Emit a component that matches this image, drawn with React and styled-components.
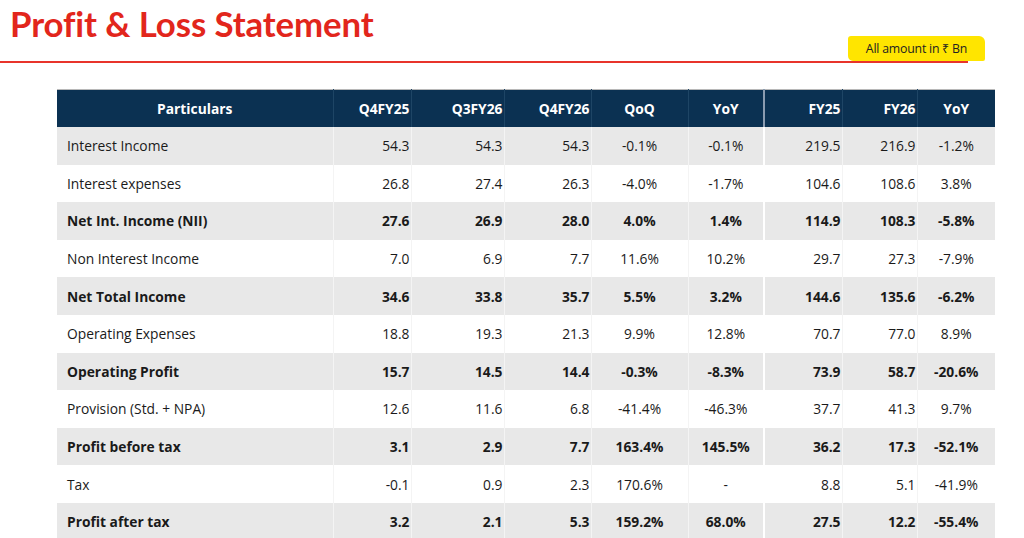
import React from 'react';
import styled, { createGlobalStyle } from 'styled-components';

const GlobalStyle = createGlobalStyle`
  body {
    margin: 0;
    background: #ffffff;
    font-family: 'Open Sans', 'Liberation Sans', sans-serif;
  }
`;

const Page = styled.div`
  width: 1024px;
  height: 538px;
  overflow: hidden;
  background: #ffffff;
`;

const TitleBlock = styled.div`
  position: relative;
  width: 968px;
  height: 63px;
  border-bottom: 2px solid #e8342b;
  box-sizing: border-box;
`;

const Title = styled.h1`
  margin: 0;
  padding: 3px 0 0 10px;
  font-family: 'Lato', 'Open Sans', sans-serif;
  font-weight: 700;
  font-size: 34.8px;
  line-height: 42px;
  color: #e2261c;
  letter-spacing: -0.1px;
`;

const Note = styled.div`
  position: absolute;
  right: -17px;
  bottom: 0px;
  width: 137px;
  height: 25px;
  display: flex;
  align-items: center;
  justify-content: center;
  background: #ffe500;
  border-radius: 3px 6px 2px 5px;
  font-size: 12.3px;
  color: #222;
  letter-spacing: -0.2px;
`;

const TableWrap = styled.div`
  padding: 26px 0 0 57px;
`;

const Table = styled.table`
  width: 938px;
  border-collapse: collapse;
  table-layout: fixed;
  font-size: 13.8px;
  color: #1a1a1a;
  border-top: 1px solid #b8b8b8;
`;

const HeadCell = styled.th`
  height: 37px;
  padding: 0 ${p => (p.$align === 'right' ? '1px' : '0')} 0 0;
  background: #0b3152;
  color: #ffffff;
  font-weight: 700;
  font-size: 13.8px;
  text-align: ${p => p.$align || 'center'};
  border-left: ${p => (p.$split ? '2px solid #8a9bb0' : '1px solid #1e4565')};
  &:first-child {
    border-left: none;
  }
`;

const Row = styled.tr`
  height: 37.6px;
  background: ${p => (p.$shade ? '#e8e8e8' : '#ffffff')};
  font-weight: ${p => (p.$bold ? 700 : 400)};
`;

const Cell = styled.td`
  padding: 0 ${p => (p.$align === 'right' ? '1px' : '0')} 0 ${p => (p.$label ? '10px' : '0')};
  text-align: ${p => p.$align || 'center'};
  white-space: nowrap;
  border-left: ${p => (p.$split ? '2px solid #ffffff' : '1px solid #f4f4f4')};
  &:first-child {
    border-left: none;
  }
`;

const columns = [
  { key: 'label', title: 'Particulars', width: 276, align: 'center' },
  { key: 'q4fy25', title: 'Q4FY25', width: 78, align: 'right' },
  { key: 'q3fy26', title: 'Q3FY26', width: 93, align: 'right' },
  { key: 'q4fy26', title: 'Q4FY26', width: 87, align: 'right' },
  { key: 'qoq', title: 'QoQ', width: 97, align: 'center' },
  { key: 'yoy', title: 'YoY', width: 76, align: 'center' },
  { key: 'fy25', title: 'FY25', width: 78, align: 'right', split: true },
  { key: 'fy26', title: 'FY26', width: 75, align: 'right' },
  { key: 'fyoy', title: 'YoY', width: 78, align: 'center' },
];

const rows = [
  { shade: true, values: ['Interest Income', '54.3', '54.3', '54.3', '-0.1%', '-0.1%', '219.5', '216.9', '-1.2%'] },
  { values: ['Interest expenses', '26.8', '27.4', '26.3', '-4.0%', '-1.7%', '104.6', '108.6', '3.8%'] },
  { shade: true, bold: true, values: ['Net Int. Income (NII)', '27.6', '26.9', '28.0', '4.0%', '1.4%', '114.9', '108.3', '-5.8%'] },
  { values: ['Non Interest Income', '7.0', '6.9', '7.7', '11.6%', '10.2%', '29.7', '27.3', '-7.9%'] },
  { shade: true, bold: true, values: ['Net Total Income', '34.6', '33.8', '35.7', '5.5%', '3.2%', '144.6', '135.6', '-6.2%'] },
  { values: ['Operating Expenses', '18.8', '19.3', '21.3', '9.9%', '12.8%', '70.7', '77.0', '8.9%'] },
  { shade: true, bold: true, values: ['Operating Profit', '15.7', '14.5', '14.4', '-0.3%', '-8.3%', '73.9', '58.7', '-20.6%'] },
  { values: ['Provision (Std. + NPA)', '12.6', '11.6', '6.8', '-41.4%', '-46.3%', '37.7', '41.3', '9.7%'] },
  { shade: true, bold: true, values: ['Profit before tax', '3.1', '2.9', '7.7', '163.4%', '145.5%', '36.2', '17.3', '-52.1%'] },
  { values: ['Tax', '-0.1', '0.9', '2.3', '170.6%', '-', '8.8', '5.1', '-41.9%'] },
  { shade: true, bold: true, values: ['Profit after tax', '3.2', '2.1', '5.3', '159.2%', '68.0%', '27.5', '12.2', '-55.4%'] },
];

const App = () => {
  return (
    <Page>
      <GlobalStyle />
      <TitleBlock>
        <Title>Profit &amp; Loss Statement</Title>
        <Note>All amount in ₹ Bn</Note>
      </TitleBlock>
      <TableWrap>
        <Table>
          <colgroup>
            {columns.map(c => (
              <col key={c.key} style={{ width: c.width }} />
            ))}
          </colgroup>
          <thead>
            <tr>
              {columns.map(c => (
                <HeadCell key={c.key} $align={c.align} $split={c.split}>
                  {c.title}
                </HeadCell>
              ))}
            </tr>
          </thead>
          <tbody>
            {rows.map(r => (
              <Row key={r.values[0]} $shade={r.shade} $bold={r.bold}>
                {r.values.map((v, i) => (
                  <Cell
                    key={columns[i].key}
                    $label={i === 0}
                    $align={i === 0 ? 'left' : columns[i].align}
                    $split={columns[i].split}
                  >
                    {v}
                  </Cell>
                ))}
              </Row>
            ))}
          </tbody>
        </Table>
      </TableWrap>
    </Page>
  );
};

export default App;
